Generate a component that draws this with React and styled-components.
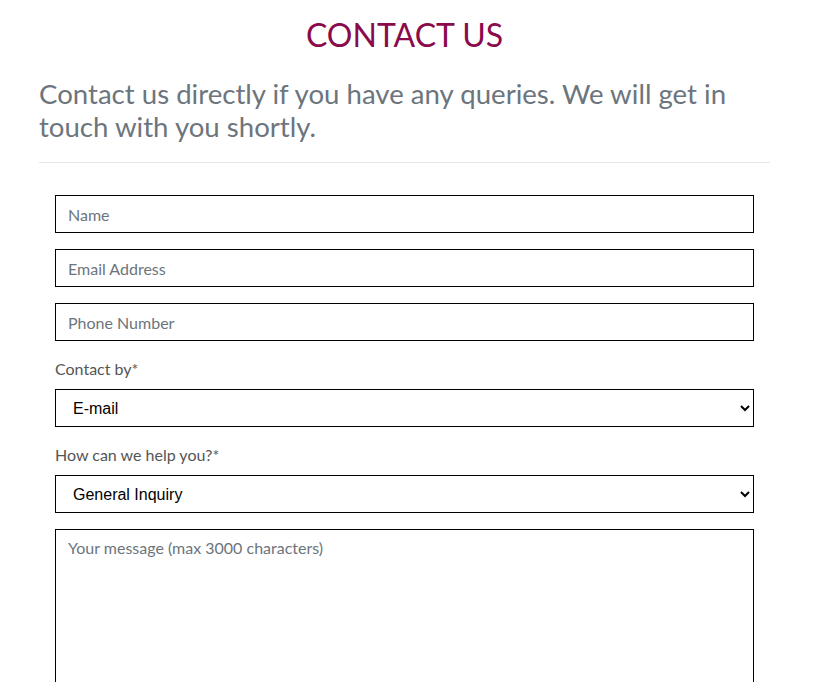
import React from 'react';
import styled, { createGlobalStyle } from 'styled-components';

const GlobalStyle = createGlobalStyle`
  body {
    margin: 0;
    background: #fff;
    font-family: Lato, "Open Sans", sans-serif;
  }
`;

const Page = styled.div`
  width: 731px;
  margin: 0 0 0 39px;
  padding-top: 15px;
`;

const Title = styled.h1`
  margin: 0;
  text-align: center;
  font-family: Lato, sans-serif;
  font-weight: 400;
  font-size: 32px;
  line-height: 40px;
  color: #8a0a4b;
`;

const Lead = styled.p`
  margin: 22px 0 0;
  font-family: Lato, sans-serif;
  font-size: 27.6px;
  line-height: 33px;
  color: #6c757d;
`;

const Divider = styled.hr`
  margin: 19px 0 0;
  border: 0;
  border-top: 1px solid #e6e6e6;
`;

const Form = styled.form`
  display: flex;
  flex-direction: column;
  gap: 16px;
  padding: 32px 16px 0;
`;

const Field = styled.div`
  display: flex;
  flex-direction: column;
  gap: 8px;
`;

const Label = styled.label`
  font-family: Lato, sans-serif;
  font-size: 16px;
  line-height: 24px;
  color: #555;
`;

const Input = styled.input`
  box-sizing: border-box;
  height: 38px;
  width: 100%;
  border: 1px solid #000;
  border-radius: 0;
  padding: 0 12px;
  font-family: Lato, sans-serif;
  font-size: 16px;
  color: #333;
  outline: none;
  &::placeholder {
    color: #6c757d;
  }
`;

const Select = styled.select`
  box-sizing: border-box;
  height: 38px;
  width: 100%;
  border: 1px solid #000;
  border-radius: 0;
  padding: 0 8px 0 13px;
  background: #fff;
  font-family: "Liberation Sans", Arial, sans-serif;
  font-size: 16px;
  color: #000;
  outline: none;
`;

const TextArea = styled.textarea`
  box-sizing: border-box;
  width: 100%;
  height: 200px;
  border: 1px solid #000;
  border-radius: 0;
  padding: 6px 12px;
  font-family: Lato, sans-serif;
  font-size: 16px;
  line-height: 24px;
  resize: vertical;
  outline: none;
  &::placeholder {
    color: #6c757d;
  }
`;

export default function App() {
  return (
    <>
      <GlobalStyle />
      <Page>
        <Title>CONTACT US</Title>
        <Lead>
          Contact us directly if you have any queries. We will get in touch with you shortly.
        </Lead>
        <Divider />
        <Form onSubmit={(e) => e.preventDefault()}>
          <Input type="text" placeholder="Name" />
          <Input type="email" placeholder="Email Address" />
          <Input type="tel" placeholder="Phone Number" />
          <Field>
            <Label>Contact by*</Label>
            <Select defaultValue="email">
              <option value="email">E-mail</option>
              <option value="phone">Phone</option>
            </Select>
          </Field>
          <Field>
            <Label>How can we help you?*</Label>
            <Select defaultValue="general">
              <option value="general">General Inquiry</option>
              <option value="support">Support</option>
            </Select>
          </Field>
          <TextArea placeholder="Your message (max 3000 characters)" />
        </Form>
      </Page>
    </>
  );
}
